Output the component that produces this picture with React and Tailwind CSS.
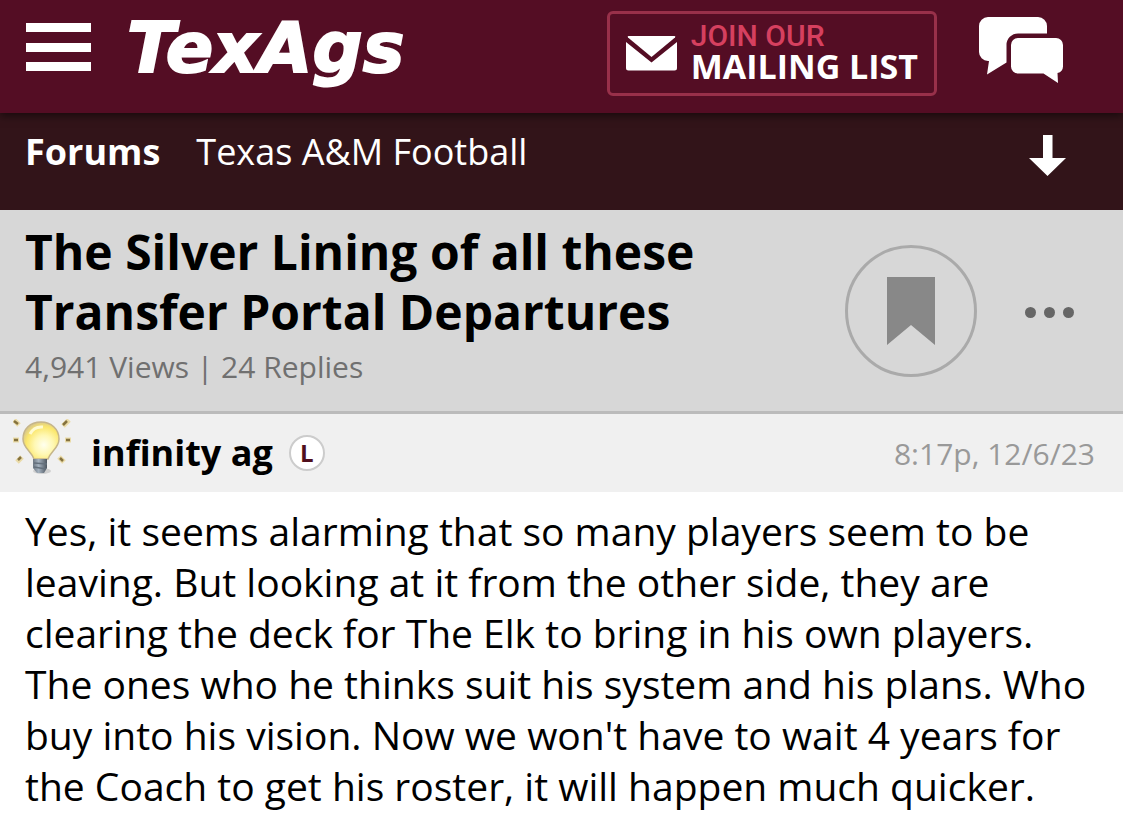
import React, { useState } from 'react';

const thread = {
  forum: 'Texas A&M Football',
  title: 'The Silver Lining of all these Transfer Portal Departures',
  views: '4,941',
  replies: 24,
};

const post = {
  author: 'infinity ag',
  badge: 'L',
  time: '8:17p, 12/6/23',
  body: "Yes, it seems alarming that so many players seem to be leaving. But looking at it from the other side, they are clearing the deck for The Elk to bring in his own players. The ones who he thinks suit his system and his plans. Who buy into his vision. Now we won't have to wait 4 years for the Coach to get his roster, it will happen much quicker.",
};

function EnvelopeIcon() {
  return (
    <svg viewBox="0 0 51 35" className="w-[51px] h-[35px] shrink-0" fill="#fff" aria-hidden="true">
      <path d="M2.500 0H48.500Q50 0 49 1.500L25.500 21L2 1.500Q1 0 2.500 0Z" />
      <path d="M0 6L25.500 26.500L51 6V32a2.500 2.500 0 0 1-2.500 2.500H2.500A2.500 2.500 0 0 1 0 32Z" />
    </svg>
  );
}

function ChatIcon() {
  return (
    <svg viewBox="0 0 84 66" className="w-[84px] h-[66px]" fill="#fff" aria-hidden="true">
      <path d="M9 0H59a9 9 0 0 1 9 9V16.500H39A11.500 11.500 0 0 0 27.500 28V45.500L8 57.500L10 44H9a9 9 0 0 1-9-9V9a9 9 0 0 1 9-9Z" />
      <path d="M39 21H77a7 7 0 0 1 7 7V49a7 7 0 0 1-5.500 7L79 66L64.500 56.500H39a7 7 0 0 1-7-7V28a7 7 0 0 1 7-7Z" />
    </svg>
  );
}

function BulbIcon() {
  return (
    <svg viewBox="0 0 58 56" className="w-[58px] h-[56px]" aria-hidden="true">
      <defs>
        <radialGradient id="glass" cx="0.58" cy="0.62" r="0.65">
          <stop offset="0" stopColor="#ffffee" />
          <stop offset="0.4" stopColor="#fff8b4" />
          <stop offset="0.75" stopColor="#fbe76c" />
          <stop offset="1" stopColor="#d5c48c" />
        </radialGradient>
        <linearGradient id="socket">
          <stop offset="0" stopColor="#6d7782" />
          <stop offset="0.4" stopColor="#a5b2bf" />
          <stop offset="1" stopColor="#4d5660" />
        </linearGradient>
      </defs>
      <g stroke="#eadba8" strokeWidth="5">
        <path d="M1 1L6 6M56 1L50 7M0 21H6M52 21H58M4 43L9 38M51 43L46 38" />
      </g>
      <g stroke="#85723f" strokeWidth="2.500">
        <path d="M1 2L5 5M54 2L50 6M1 21H5M53 21H57M5 41L8 38M50 42L47 39" />
      </g>
      <ellipse cx="29" cy="52" rx="9" ry="3" fill="#cfcfcf" />
      <path
        d="M28 3C17 3 10 10 10 20C10 29 18 32 21 40H35C38 32 46 29 46 20C46 10 38 3 28 3Z"
        fill="url(#glass)"
        stroke="#c5b58a"
        strokeWidth="1.500"
      />
      <path d="M17 15Q21 7 30 8" stroke="#fffbd0" strokeWidth="3" fill="none" />
      <path d="M20 40H34V49L31 54H24L20 49Z" fill="url(#socket)" />
      <path d="M21 44L34 45M21 48L33 50" stroke="#64707c" strokeWidth="1.500" />
    </svg>
  );
}

function Header() {
  return (
    <header className="relative flex items-start justify-between bg-[#540d24] h-[113px] pl-[26px] pr-[60px] shadow-[0_3px_8px_rgba(0,0,0,0.5)]">
      <div className="flex items-start gap-9">
        <button type="button" aria-label="Menu" className="mt-[23px] flex flex-col justify-between h-12">
          <span className="block w-[65px] h-[9px] bg-white" />
          <span className="block w-[65px] h-[9px] bg-white" />
          <span className="block w-[65px] h-[9px] bg-white" />
        </button>
        <a
          href="#home"
          className="mt-4 font-['DejaVu_Sans',sans-serif] text-[70px] leading-[64px] font-bold italic text-white [-webkit-text-stroke:2px_white]"
        >
          TexAgs
        </a>
      </div>

      <div className="flex items-start gap-[42px]">
        <button
          type="button"
          className="mt-[11px] flex items-center gap-[14px] rounded-md border-3 border-[#98304a] h-[85px] px-4 text-left"
        >
          <EnvelopeIcon />
          <span className="block pb-[6px] whitespace-nowrap">
            <span className="block font-[Roboto,sans-serif] text-[30px] leading-[30px] font-medium text-[#d6405f]">JOIN OUR</span>
            <span className="block text-[34px] leading-[30px] font-bold text-white">MAILING LIST</span>
          </span>
        </button>
        <button type="button" aria-label="Chat" className="mt-[17px]">
          <ChatIcon />
        </button>
      </div>
    </header>
  );
}

function ForumNav() {
  return (
    <nav className="flex items-center justify-between bg-[#321419] h-[97px] pl-[25px] pr-[57px] pb-5 text-[36px] text-white">
      <div className="flex gap-9">
        <a href="#forums" className="font-bold">Forums</a>
        <a href="#football">{thread.forum}</a>
      </div>
      <button type="button" aria-label="Jump to bottom" className="mt-2">
        <svg viewBox="0 0 37 41" className="w-[37px] h-[41px]" fill="#fff" aria-hidden="true">
          <path d="M14 0H23.500V23H37L18.500 41L0 23H14Z" />
        </svg>
      </button>
    </nav>
  );
}

function ThreadTitle() {
  const [saved, setSaved] = useState(false);

  return (
    <section className="flex items-start justify-between bg-[#d7d7d7] border-b-3 border-[#bbb] h-[204px] pl-[25px] pr-[49px]">
      <div className="max-w-[720px] pt-3">
        <h1 className="text-[48px] leading-[60px] font-bold text-black">{thread.title}</h1>
        <p className="mt-[5px] text-[30px] leading-[40px] text-[#707070]">
          {thread.views} Views | {thread.replies} Replies
        </p>
      </div>
      <div className="mt-[35px] flex items-center gap-12">
        <button
          type="button"
          aria-label="Bookmark"
          aria-pressed={saved}
          onClick={() => setSaved(!saved)}
          className="flex items-center justify-center size-[132px] rounded-full border-3 border-[#aaa]"
        >
          <svg viewBox="0 0 48 68" className="w-12 h-[68px]" fill="#888" aria-hidden="true">
            <path d="M0 0H48V68L24 48L0 68Z" />
          </svg>
        </button>
        <button type="button" aria-label="More options" className="flex gap-2 pt-[2px]">
          <span className="size-[11px] rounded-full bg-[#666]" />
          <span className="size-[11px] rounded-full bg-[#666]" />
          <span className="size-[11px] rounded-full bg-[#666]" />
        </button>
      </div>
    </section>
  );
}

function Post() {
  return (
    <article>
      <div className="flex items-center justify-between bg-[#f0f0f0] h-[78px] pl-[13px] pr-7">
        <div className="flex items-center">
          <span className="mb-3">
            <BulbIcon />
          </span>
          <a href="#author" className="ml-5 text-[36px] font-bold text-black">{post.author}</a>
          <span className="ml-4 flex items-center justify-center size-9 rounded-full border-2 border-[#ccc] bg-white text-[24px] font-bold text-[#500f1d]">
            {post.badge}
          </span>
        </div>
        <time className="text-[30px] text-[#999]">{post.time}</time>
      </div>
      <p className="px-[25px] pt-[13px] pb-6 text-[39px] leading-[51px] text-black">{post.body}</p>
    </article>
  );
}

export default function App() {
  return (
    <div className="min-h-screen bg-white font-['Open_Sans',sans-serif]">
      <Header />
      <ForumNav />
      <main>
        <ThreadTitle />
        <Post />
      </main>
    </div>
  );
}
